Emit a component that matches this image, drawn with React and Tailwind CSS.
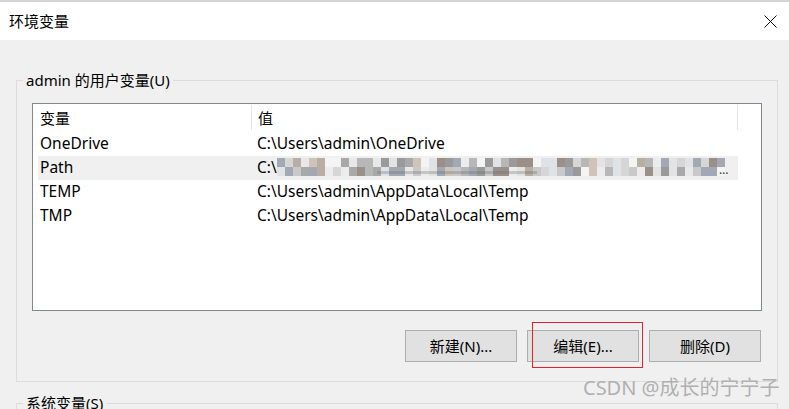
import React from "react";

const FONT = "font-['Noto_Sans','Noto_Sans_CJK_SC',sans-serif]";

function Mosaic() {
  const palette = ["#9a9a9a", "#a9a9a9", "#b7b7b7", "#c9c9c9", "#d6d6d6", "#e3e3e3", "#ececec", "#b9aea3", "#a3a9b4", "#cfc4b8", "#9a9089", "#dfe3e8", "#f4f4f4", "#e8e8e8"];
  let seed = 7;
  const rnd = () => {
    seed = (seed * 1103515245 + 12345) % 2147483648;
    return seed / 2147483648;
  };
  const rects = [];
  const w = 8;
  for (let row = 0; row < 2; row++) {
    for (let i = 0; i < 56; i++) {
      const c = palette[Math.floor(rnd() * palette.length)];
      rects.push(<rect key={row + "-" + i} x={i * w} y={row * 9} width={w} height={9} fill={c} />);
    }
  }
  return (
    <svg width="452" height="20" viewBox="0 0 452 20" className="block">
      {rects}
      <rect x="100" y="13" width="160" height="3" fill="#6b6b6b" opacity="0.3" />
      <text x="442" y="16" fontSize="12" fill="#333">…</text>
    </svg>
  );
}

function Row({ name, value, hl, children }) {
  return (
    <div className={`flex h-[24px] items-center ml-[5px] w-[700px] text-[15.5px] ${hl ? "bg-[#f0f0f0]" : ""}`}>
      <div className="w-[212px] pl-[2px] shrink-0">{name}</div>
      <div className="pl-[7px] flex items-center">{value}{children}</div>
    </div>
  );
}

function Btn({ children }) {
  return (
    <div className="w-[112px] h-[32px] bg-[#e1e1e1] border border-[#adadad] flex items-center justify-center text-[15px] text-black">
      {children}
    </div>
  );
}

export default function App() {
  return (
    <div className={`w-[789px] h-[409px] overflow-hidden bg-[#f0f0f0] relative text-[15px] text-black ${FONT}`}>
      <div className="h-[2px] bg-[#d4d4d4]" />
      <div className="h-[38px] bg-white flex items-center justify-between pl-[9px] pr-[12px]">
        <span className="text-[15px] leading-none">环境变量</span>
        <svg width="13" height="13" viewBox="0 0 13 13">
          <path d="M0.5 0.5 L12.5 12.5 M12.5 0.5 L0.5 12.5" stroke="#111" strokeWidth="1" />
        </svg>
      </div>

      <div className="ml-[16px] mt-[40px] w-[762px] h-[302px] border border-[#dcdcdc] relative">
        <div className="absolute left-[6px] top-[-11px] px-[3px] bg-[#f0f0f0] leading-[20px]">admin 的用户变量(U)</div>
        <div className="ml-[15px] mt-[22px] w-[730px] h-[208px] border border-[#828790] bg-white">
          <div className="h-[28px] flex items-center relative">
            <div className="w-[218px] pl-[7px] pt-[1px]">变量</div>
            <div className="w-px h-[25px] bg-[#e5e5e5] self-start mt-[1px]" />
            <div className="w-[485px] pl-[6px] pt-[1px]">值</div>
            <div className="w-px h-[25px] bg-[#e5e5e5] self-start mt-[1px]" />
          </div>
          <Row name="OneDrive" value="C:\Users\admin\OneDrive" />
          <Row name="Path" value="C:\" hl>
            <Mosaic />
          </Row>
          <Row name="TEMP" value="C:\Users\admin\AppData\Local\Temp" />
          <Row name="TMP" value="C:\Users\admin\AppData\Local\Temp" />
        </div>
        <div className="ml-[15px] mt-[19px] w-[730px] pr-[1px] flex justify-end gap-[10px]">
          <Btn>新建(N)...</Btn>
          <div className="relative">
            <Btn>编辑(E)...</Btn>
            <div className="absolute left-[5px] top-[-8px] w-[111px] h-[46px] border border-[#e8202a]" />
          </div>
          <Btn>删除(D)</Btn>
        </div>
      </div>

      <div className="ml-[16px] mt-[21px] w-[762px] h-[40px] border border-[#dcdcdc] relative">
        <div className="absolute left-[6px] top-[-11px] px-[3px] bg-[#f0f0f0] leading-[20px]">系统变量(S)</div>
      </div>

      <div className="absolute left-[583px] top-[375px] text-[20px] leading-[26px] text-[#b0b0b0] whitespace-nowrap">CSDN @成长的宁宁子</div>
    </div>
  );
}
